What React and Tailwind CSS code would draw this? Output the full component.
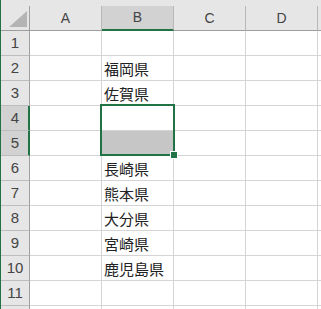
import React from "react";

const COLS = ["A", "B", "C", "D"];

// B列の内容（行番号 → 県名）
const DATA = {
  2: "福岡県",
  3: "佐賀県",
  6: "長崎県",
  7: "熊本県",
  8: "大分県",
  9: "宮崎県",
  10: "鹿児島県",
};

const ROWS = [1, 2, 3, 4, 5, 6, 7, 8, 9, 10, 11, 12];

function HeaderRow() {
  return (
    <div className="flex h-[31px] bg-[#e6e6e6] pt-[6px]">
      {/* corner */}
      <div className="relative w-[29px] shrink-0 border-r border-[#a0a0a0] border-b border-b-[#9e9e9e]">
        <svg className="absolute left-[8px] top-[5px]" width="18" height="16" viewBox="0 0 18 16">
          <polygon points="18,0 18,16 0,16" fill="#b4b4b4" />
        </svg>
      </div>
      {COLS.map((c) => {
        const sel = c === "B";
        return (
          <div
            key={c}
            className={
              sel
                ? "flex w-[72px] shrink-0 items-center justify-center border-r border-[#b8b8b8] border-b-2 border-b-[#217346] bg-[#d2d2d2] text-[14px] text-[#444]"
                : "flex w-[72px] shrink-0 items-center justify-center border-r border-[#b8b8b8] border-b border-b-[#9e9e9e] text-[14px] text-[#444]"
            }
            style={{ fontFamily: '"Liberation Sans", Arial, sans-serif' }}
          >
            {c}
          </div>
        );
      })}
      <div className="flex-1 border-b border-[#9e9e9e]" />
    </div>
  );
}

function Row({ n }) {
  const sel = n === 4 || n === 5;
  return (
    <div className="flex h-[25px]">
      <div
        className={
          sel
            ? "flex w-[29px] shrink-0 items-center justify-center border-r-2 border-[#217346] border-b border-b-[#bdbdbd] bg-[#d2d2d2] pl-[1px] text-[15px] text-[#444]"
            : "flex w-[29px] shrink-0 items-center justify-center border-r border-[#9e9e9e] border-b border-b-[#bdbdbd] bg-[#e6e6e6] text-[15px] text-[#444]"
        }
        style={{ fontFamily: '"Liberation Sans", Arial, sans-serif' }}
      >
        {n < 12 ? n : ""}
      </div>
      {COLS.map((c) => (
        <div
          key={c}
          className={
            c === "B" && n === 5
              ? "flex w-[72px] shrink-0 items-center border-r border-b border-[#d4d4d4] bg-[#c6c6c6] pl-[2px]"
              : "flex w-[72px] shrink-0 items-center border-r border-b border-[#d4d4d4] pl-[2px]"
          }
        >
          {c === "B" && DATA[n] && (
            <span
              className="text-[15px] leading-none text-[#222]"
              style={{ fontFamily: '"Noto Sans CJK JP", sans-serif' }}
            >
              {DATA[n]}
            </span>
          )}
        </div>
      ))}
      <div className="flex-1 border-b border-[#d4d4d4]" />
    </div>
  );
}

export default function App() {
  return (
    <div className="relative h-[309px] w-[321px] overflow-hidden border-l border-[#217346] bg-white">
      <HeaderRow />
      {ROWS.map((n) => (
        <Row key={n} n={n} />
      ))}

      {/* selection B4:B5 */}
      <div className="absolute left-[99px] top-[104px] h-[52px] w-[75px] border-2 border-[#217346]" />
      {/* fill handle */}
      <div className="absolute left-[169px] top-[151px] h-[8px] w-[8px] border border-white bg-[#217346]" />
    </div>
  );
}
